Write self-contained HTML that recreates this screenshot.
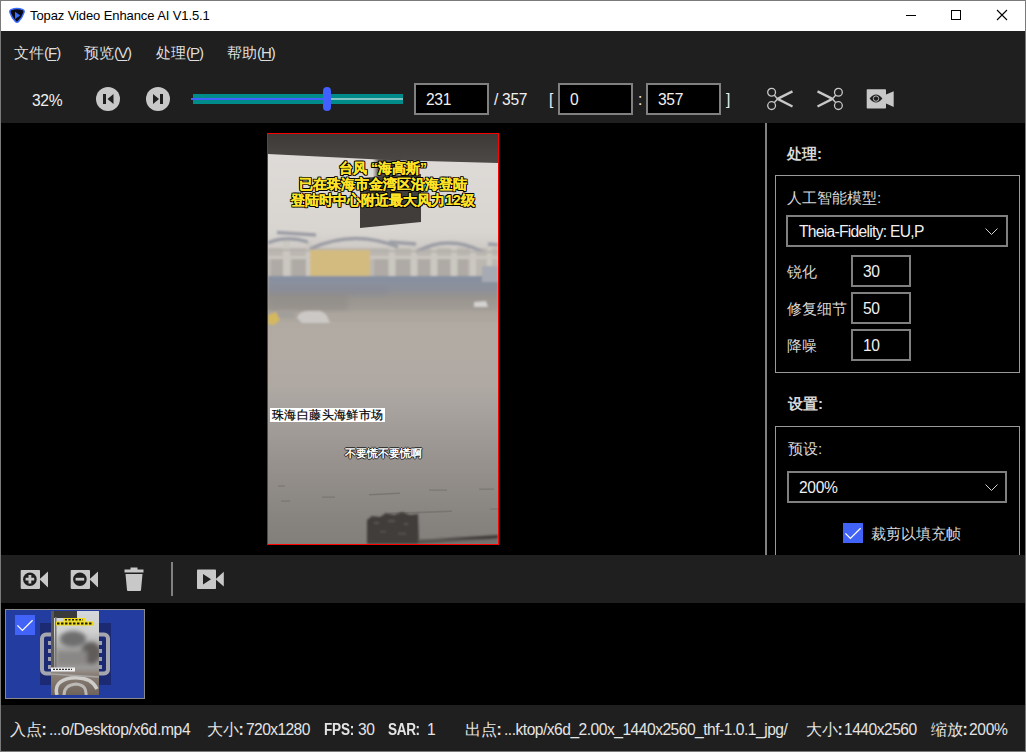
<!DOCTYPE html>
<html><head><meta charset="utf-8">
<style>
html,body{margin:0;padding:0;}
body{width:1026px;height:752px;position:relative;overflow:hidden;background:#000;font-family:"Liberation Sans",sans-serif;color:#e8e8e8;}
.a{position:absolute;}
.t{position:absolute;white-space:nowrap;line-height:1;}
#border{left:0;top:0;width:1024px;height:750px;border:1px solid #7a7a7a;z-index:50;pointer-events:none;}
#title{left:0;top:0;width:1026px;height:31px;background:#fff;}
#dark1{left:0;top:31px;width:1026px;height:92px;background:#1f1f1f;}
#main{left:0;top:123px;width:1026px;height:432px;background:#000;}
#tb2{left:0;top:555px;width:1026px;height:48px;background:#1f1f1f;}
#thumbs{left:0;top:603px;width:1026px;height:102px;background:#000;}
#status{left:0;top:705px;width:1026px;height:47px;background:#1f1f1f;}
.menu{font-size:15px;color:#dedede;top:45px;}
.menu u{text-decoration:underline;text-underline-offset:2px;}
.box{position:absolute;background:#000;border:2px solid #808080;box-sizing:border-box;}
.val{font-size:15.6px;color:#f0f0f0;letter-spacing:-0.3px;}
.lbl{font-size:15px;color:#d8d8d8;}
.grp{position:absolute;border:1px solid #9a9a9a;box-sizing:border-box;}
.st{font-size:15.6px;color:#e4e4e4;top:722px;letter-spacing:-0.3px;}
.st b{font-weight:bold;}
.sub{position:absolute;text-align:center;font-size:14px;line-height:15px;font-weight:bold;color:#ffe425;-webkit-text-stroke:0.15px #ffe425;white-space:nowrap;text-shadow:1px 0 0 #000,-1px 0 0 #000,0 1px 0 #000,0 -1px 0 #000,1px 1px 0 #000,-1px -1px 0 #000,1px -1px 0 #000,-1px 1px 0 #000;}
</style></head><body>
<div id="title" class="a"></div>
<div id="dark1" class="a"></div>
<div id="main" class="a"></div>
<div id="tb2" class="a"></div>
<div id="thumbs" class="a"></div>
<div id="status" class="a"></div>

<!-- title bar -->
<svg class="a" style="left:8px;top:6px" width="18" height="18" viewBox="0 0 18 18">
  <path d="M3.2 3.6 Q9 1.2 14.8 3.6 Q16.6 4.4 16 6.4 Q14.2 12 10.4 15.6 Q9 16.8 7.6 15.6 Q3.8 12 2 6.4 Q1.4 4.4 3.2 3.6Z" fill="#0b0b18" stroke="#3a6cff" stroke-width="1.5"/>
  <path d="M7 5.8 L12.2 9.4 L7 13Z" fill="#3d6dff"/>
</svg>
<div class="t" style="left:30px;top:9px;font-size:13px;color:#000;letter-spacing:-0.1px;">Topaz Video Enhance AI V1.5.1</div>
<div class="a" style="left:906px;top:15px;width:10px;height:1px;background:#000;"></div>
<div class="a" style="left:951px;top:10px;width:8px;height:8px;border:1px solid #000;"></div>
<svg class="a" style="left:996px;top:9px" width="12" height="12" viewBox="0 0 12 12"><path d="M1 1L11 11M11 1L1 11" stroke="#000" stroke-width="1.1"/></svg>

<!-- menu -->
<div class="t menu" style="left:14px;">文件<span style="letter-spacing:-1px">(<u>F</u>)</span></div>
<div class="t menu" style="left:84px;">预览<span style="letter-spacing:-1px">(<u>V</u>)</span></div>
<div class="t menu" style="left:156px;">处理<span style="letter-spacing:-1px">(<u>P</u>)</span></div>
<div class="t menu" style="left:227px;">帮助<span style="letter-spacing:-1px">(<u>H</u>)</span></div>

<!-- toolbar -->
<div class="t val" style="left:32px;top:93px;">32%</div>
<svg class="a" style="left:96px;top:87px" width="24" height="24" viewBox="0 0 24 24">
  <circle cx="12" cy="12" r="12" fill="#c8c8c8"/>
  <rect x="7" y="7" width="3" height="10" fill="#1f1f1f"/>
  <path d="M17.5 7 L11.5 12 L17.5 17Z" fill="#1f1f1f"/>
</svg>
<svg class="a" style="left:146px;top:87px" width="24" height="24" viewBox="0 0 24 24">
  <circle cx="12" cy="12" r="12" fill="#c8c8c8"/>
  <rect x="14" y="7" width="3" height="10" fill="#1f1f1f"/>
  <path d="M7 7 L13 12 L7 17Z" fill="#1f1f1f"/>
</svg>
<!-- slider -->
<div class="a" style="left:193px;top:94px;width:210px;height:10px;background:#008b8b;"></div>
<div class="a" style="left:191px;top:98px;width:136px;height:2px;background:#4060ff;"></div>
<div class="a" style="left:327px;top:98px;width:76px;height:2px;background:#80c4c4;"></div>
<div class="a" style="left:323px;top:87px;width:8px;height:24px;border-radius:4px;background:#4060ff;"></div>

<div class="box" style="left:414px;top:83px;width:75px;height:32px;"></div>
<div class="t val" style="left:426px;top:92px;">231</div>
<div class="t val" style="left:494px;top:92px;">/ 357</div>
<div class="t val" style="left:549px;top:92px;">[</div>
<div class="box" style="left:558px;top:83px;width:75px;height:32px;"></div>
<div class="t val" style="left:570px;top:92px;">0</div>
<div class="t val" style="left:638px;top:92px;">:</div>
<div class="box" style="left:646px;top:83px;width:75px;height:32px;"></div>
<div class="t val" style="left:658px;top:92px;">357</div>
<div class="t val" style="left:726px;top:92px;">]</div>

<!-- scissors -->
<svg class="a" style="left:764px;top:85px" width="32" height="28" viewBox="0 0 32 28">
  <circle cx="7.6" cy="7.2" r="3.9" fill="none" stroke="#c8c8c8" stroke-width="1.3"/>
  <circle cx="7.6" cy="20.6" r="3.9" fill="none" stroke="#c8c8c8" stroke-width="1.3"/>
  <path d="M10.2 10 L13.5 13.9 L10.2 17.8" fill="none" stroke="#c8c8c8" stroke-width="1.4"/>
  <path d="M12 13.2 L28 5.2 L29 7.4 L15.5 14.2 Z" fill="#c8c8c8"/>
  <path d="M12 14.6 L28 22.6 L29 20.4 L15.5 13.6 Z" fill="#c8c8c8"/>
</svg>
<svg class="a" style="left:814px;top:85px" width="32" height="28" viewBox="0 0 32 28">
  <circle cx="24.4" cy="7.2" r="3.9" fill="none" stroke="#c8c8c8" stroke-width="1.3"/>
  <circle cx="24.4" cy="20.6" r="3.9" fill="none" stroke="#c8c8c8" stroke-width="1.3"/>
  <path d="M21.8 10 L18.5 13.9 L21.8 17.8" fill="none" stroke="#c8c8c8" stroke-width="1.4"/>
  <path d="M20 13.2 L4 5.2 L3 7.4 L16.5 14.2 Z" fill="#c8c8c8"/>
  <path d="M20 14.6 L4 22.6 L3 20.4 L16.5 13.6 Z" fill="#c8c8c8"/>
</svg>
<svg class="a" style="left:866px;top:89px" width="28" height="20" viewBox="0 0 28 20">
  <rect x="0.7" y="0.2" width="19.3" height="19.3" rx="0.8" fill="#c8c8c8"/>
  <path d="M19.5 5.8 L27.7 2.2 L27.7 18 L19.5 14.2Z" fill="#c8c8c8"/>
  <path d="M3.6 9.6 Q10 1.6 16.4 9.6 Q10 17.6 3.6 9.6Z" fill="#1f1f1f"/>
  <circle cx="10" cy="9.6" r="2.7" fill="none" stroke="#c8c8c8" stroke-width="0.9"/>
  <circle cx="10" cy="9.6" r="1.6" fill="#1f1f1f"/>
</svg>

<!-- right panel -->
<div class="a" style="left:765px;top:123px;width:2px;height:432px;background:#808080;"></div>
<div class="t lbl" style="left:787px;top:146px;font-weight:bold;">处理:</div>
<div class="grp" style="left:775px;top:175px;width:245px;height:198px;"></div>
<div class="t lbl" style="left:787px;top:190px;">人工智能模型:</div>
<div class="box" style="left:786px;top:215px;width:222px;height:32px;"></div>
<div class="t val" style="left:799px;top:223.5px;letter-spacing:-0.7px;">Theia-Fidelity: EU,P</div>
<svg class="a" style="left:984px;top:227px" width="15" height="9" viewBox="0 0 15 9"><path d="M1.5 1.5L7.5 7.5L13.5 1.5" fill="none" stroke="#d0d0d0" stroke-width="1"/></svg>
<div class="t lbl" style="left:787px;top:264px;">锐化</div>
<div class="box" style="left:851px;top:255px;width:60px;height:32px;"></div>
<div class="t val" style="left:863px;top:264px;">30</div>
<div class="t lbl" style="left:787px;top:301px;">修复细节</div>
<div class="box" style="left:851px;top:292px;width:60px;height:32px;"></div>
<div class="t val" style="left:863px;top:301px;">50</div>
<div class="t lbl" style="left:787px;top:338px;">降噪</div>
<div class="box" style="left:851px;top:329px;width:60px;height:32px;"></div>
<div class="t val" style="left:863px;top:338px;">10</div>

<div class="t lbl" style="left:788px;top:396px;font-weight:bold;">设置:</div>
<div class="grp" style="left:775px;top:426px;width:245px;height:129px;border-bottom:none;"></div>
<div class="t lbl" style="left:788px;top:441px;">预设:</div>
<div class="box" style="left:787px;top:471px;width:220px;height:32px;"></div>
<div class="t val" style="left:799px;top:480px;">200%</div>
<svg class="a" style="left:984px;top:483px" width="15" height="9" viewBox="0 0 15 9"><path d="M1.5 1.5L7.5 7.5L13.5 1.5" fill="none" stroke="#d0d0d0" stroke-width="1"/></svg>
<div class="a" style="left:843px;top:523px;width:20px;height:20px;background:#4163f7;"></div>
<svg class="a" style="left:843px;top:523px" width="20" height="20" viewBox="0 0 20 20"><path d="M2.4 10.4L7.4 15.4L17.6 5.3" fill="none" stroke="#fff" stroke-width="1.3"/></svg>
<div class="t lbl" style="left:871px;top:526px;">裁剪以填充帧</div>

<!-- video frame placeholder -->
<div class="a" style="left:267px;top:133px;width:230px;height:410px;border:1px solid #ff0000;background:#9a948e;overflow:hidden;" id="frame">
<svg width="230" height="410" viewBox="0 0 230 410" style="position:absolute;left:0;top:0">
<defs>
<linearGradient id="gbg" x1="0" y1="0" x2="0" y2="1">
<stop offset="0" stop-color="#e0dcd9"/>
<stop offset="0.24" stop-color="#d8d4d0"/>
<stop offset="0.42" stop-color="#a9a39c"/>
<stop offset="0.46" stop-color="#b0aaa2"/>
<stop offset="0.52" stop-color="#b2aba4"/>
<stop offset="0.61" stop-color="#b0a9a3"/>
<stop offset="0.65" stop-color="#aaa5a0"/>
<stop offset="0.80" stop-color="#97928e"/>
<stop offset="0.94" stop-color="#87837f"/>
<stop offset="1" stop-color="#827e7a"/>
</linearGradient>
<linearGradient id="gband" x1="0" y1="0" x2="0" y2="1">
<stop offset="0" stop-color="#3c3937"/>
<stop offset="1" stop-color="#4c4946"/>
</linearGradient>
<linearGradient id="gmist" x1="0" y1="0" x2="0" y2="1">
<stop offset="0" stop-color="#8690a2"/>
<stop offset="0.35" stop-color="#8c909a"/>
<stop offset="0.6" stop-color="#98948f"/>
<stop offset="1" stop-color="#a49e97"/>
</linearGradient>
<filter id="bl1" x="-10%" y="-10%" width="120%" height="120%"><feGaussianBlur stdDeviation="1"/></filter>
<filter id="bl2" x="-10%" y="-10%" width="120%" height="120%"><feGaussianBlur stdDeviation="2"/></filter>
<filter id="bl05" x="-10%" y="-10%" width="120%" height="120%"><feGaussianBlur stdDeviation="0.6"/></filter>
</defs>
<rect x="0" y="0" width="230" height="410" fill="url(#gbg)"/>
<!-- buildings -->
<g filter="url(#bl1)">
<rect x="0" y="114" width="230" height="31" fill="#bcb7b1"/>
<g fill="#afaaa5">
<rect x="3" y="125" width="12" height="18"/><rect x="24" y="125" width="14" height="18"/><rect x="106" y="125" width="14" height="18"/><rect x="128" y="125" width="14" height="18"/><rect x="150" y="125" width="12" height="18"/><rect x="170" y="125" width="12" height="18"/><rect x="190" y="125" width="10" height="18"/>
</g>
<g fill="#cbc7c1">
<rect x="15" y="106" width="7" height="38"/><rect x="38" y="108" width="6" height="36"/><rect x="121" y="108" width="6" height="36"/><rect x="143" y="110" width="6" height="34"/><rect x="163" y="112" width="6" height="32"/><rect x="183" y="114" width="6" height="30"/><rect x="202" y="114" width="6" height="30"/><rect x="219" y="112" width="5" height="32"/>
</g>
<rect x="0" y="122" width="230" height="3" fill="#cac6c0"/>
<g fill="none" stroke="#9c9ea6" stroke-width="3.4">
<path d="M9 98.5 L48 101"/>
<path d="M0 109 Q18 101 40 108"/>
<path d="M42 115 Q85 95 130 113"/>
<path d="M121 108 L148 110"/>
<path d="M148 118 Q180 100 215 118"/>
<path d="M220 110 L230 111"/>
<path d="M0 116 L230 118" stroke="#b4b0ac" stroke-width="2"/>
</g>
<rect x="42" y="116" width="60" height="26" fill="#d3bb7f"/>
<rect x="0" y="142" width="230" height="36" fill="url(#gmist)"/>
<rect x="214" y="132" width="16" height="16" fill="#a6aab2"/>
<rect x="0" y="152" width="120" height="10" fill="#868994" opacity="0.4" filter="url(#bl2)"/>
</g>
<g filter="url(#bl1)">
<rect x="0" y="176" width="230" height="12" fill="#aaa49d" opacity="0.5"/>
<rect x="0" y="160" width="80" height="16" fill="#8e8a86" opacity="0.5" filter="url(#bl2)"/>
<path d="M7 184 L9 177 L25 176 L27 184Z" fill="#a29e9a"/>
<path d="M29 184 Q31 177 40 177 L52 177 Q58 179 60 184 L62 189 L34 189Z" fill="#cbc8c5"/>
<path d="M0 181 L8 178 L12 186 L6 191 L0 190Z" fill="#d4b860"/>
<path d="M206 168 L218 167 L220 173 L206 173Z" fill="#d4d2d0"/>
</g>
<!-- top dark band -->
<path d="M0 0 L230 0 L230 29 L120 26 L0 20Z" fill="url(#gband)"/>
<rect x="108" y="24" width="22" height="22" fill="#4a4744" filter="url(#bl2)"/>
<path d="M92 44 L153 40 L153 88 L92 94Z" fill="#403d3b" filter="url(#bl05)"/>
<!-- ripples on water -->
<g filter="url(#bl05)" fill="#75716d" opacity="0.8">
<path d="M101 360 L132 358.5 L132 360 L101 361.5Z"/>
<rect x="54" y="362.5" width="13" height="1.2"/>
<rect x="10" y="351.5" width="7" height="1.2"/>
<rect x="161" y="355.5" width="18" height="1.2"/>
<rect x="211" y="354.5" width="15" height="1.2"/>
<rect x="222" y="374.5" width="8" height="1.2"/>
<rect x="13" y="366.5" width="9" height="1.2"/>
<path d="M121 378.5 L184 376.5 L184 378 L121 380.5Z"/>
</g>
<g filter="url(#bl1)">
<path d="M99 386 L104 382 L112 383 L118 379 L126 381 L134 378 L142 381 L150 380 L151 410 L99 410Z" fill="#403d3a"/>
<path d="M150 406 L230 401 L230 404.5 L150 410Z" fill="#3e3b38"/><rect x="150" y="405" width="80" height="5" fill="#6a6662" opacity="0.6"/>
<g fill="#5e5a56" opacity="0.8"><rect x="106" y="388" width="5" height="2"/><rect x="120" y="386" width="7" height="2"/><rect x="136" y="389" width="4" height="2"/><rect x="112" y="397" width="6" height="1.5"/><rect x="130" y="399" width="8" height="1.5"/></g>
</g>
</g>
</svg>
<div class="sub" style="left:0;top:27px;width:230px;">台风 “海高斯”</div>
<div class="sub" style="left:0;top:43px;width:230px;">已在珠海市金湾区沿海登陆</div>
<div class="sub" style="left:0;top:59px;width:230px;">登陆时中心附近最大风力12级</div>
<div class="t" style="left:2px;top:274px;width:115px;height:14px;background:#fff;color:#000;font-size:12px;line-height:14px;padding-left:2px;box-sizing:border-box;-webkit-text-stroke:0.2px #000;letter-spacing:0.4px;">珠海白藤头海鲜市场</div>
<div class="t" style="left:77px;top:313px;color:#fff;font-size:11px;line-height:12px;font-weight:bold;text-shadow:1px 0 0 #222,-1px 0 0 #222,0 1px 0 #222,0 -1px 0 #222;">不要慌不要慌啊</div>
</div>

<!-- bottom toolbar -->
<div class="a" style="left:171px;top:562px;width:2px;height:34px;background:#808080;"></div>
<svg class="a" style="left:20px;top:569px" width="29" height="21" viewBox="0 0 29 21">
<rect x="0.7" y="0.9" width="19.3" height="19" rx="0.8" fill="#c8c8c8"/><path d="M19.5 10.2 L28 2.6 L28 18.4Z" fill="#c8c8c8"/>
<circle cx="9.9" cy="10.2" r="6.8" fill="#1f1f1f"/><path d="M9.9 5.9V14.5M5.6 10.2H14.2" stroke="#c8c8c8" stroke-width="2.8"/>
</svg>
<svg class="a" style="left:70px;top:569px" width="29" height="21" viewBox="0 0 29 21">
<rect x="0.7" y="0.9" width="19.3" height="19" rx="0.8" fill="#c8c8c8"/><path d="M19.5 10.2 L28 2.6 L28 18.4Z" fill="#c8c8c8"/>
<circle cx="9.9" cy="10.2" r="6.8" fill="#1f1f1f"/><path d="M5.6 10.2H14.2" stroke="#c8c8c8" stroke-width="2.8"/>
</svg>
<svg class="a" style="left:123px;top:566px" width="22" height="26" viewBox="0 0 22 26">
<path d="M7.5 1.5 H14.5 V3.5 H20.5 V6.5 H1.5 V3.5 H7.5Z" fill="#c8c8c8"/>
<path d="M2.5 8 H19.5 L18 24 Q18 25 17 25 H5 Q4 25 4 24Z" fill="#c8c8c8"/>
</svg>
<svg class="a" style="left:196px;top:569px" width="29" height="21" viewBox="0 0 29 21">
<rect x="1" y="0.5" width="19" height="19.5" rx="0.8" fill="#c8c8c8"/><path d="M19.5 10.2 L27.8 2.8 L27.8 17.6Z" fill="#c8c8c8"/>
<path d="M7 5 L15 10.2 L7 15.4Z" fill="#1f1f1f"/>
</svg>

<!-- thumbnail -->
<div class="a" style="left:5px;top:609px;width:140px;height:90px;background:#233c9f;border:1px solid #8a8a8a;box-sizing:border-box;"></div>
<svg class="a" style="left:40px;top:622px" width="71" height="63" viewBox="0 0 71 63">
<rect x="0" y="1" width="71" height="62" fill="#1b2a72"/>
<rect x="2" y="12.5" width="66" height="39" rx="4" fill="none" stroke="#a6a6ae" stroke-width="4"/>
<g fill="#9ea0b0"><rect x="8" y="19" width="4" height="4"/><rect x="8" y="27" width="4" height="4"/><rect x="8" y="35" width="4" height="4"/><rect x="8" y="43" width="4" height="4"/>
<rect x="58" y="19" width="4" height="4"/><rect x="58" y="27" width="4" height="4"/><rect x="58" y="35" width="4" height="4"/><rect x="58" y="43" width="4" height="4"/></g>
</svg>
<svg class="a" style="left:51px;top:611px" width="48" height="84" viewBox="0 0 48 84">
<defs><linearGradient id="tg" x1="0" y1="0" x2="0" y2="1">
<stop offset="0" stop-color="#d4d8da"/><stop offset="0.25" stop-color="#d0d0d0"/><stop offset="0.45" stop-color="#a6a6a4"/><stop offset="0.68" stop-color="#9a9896"/><stop offset="0.75" stop-color="#8a8078"/><stop offset="1" stop-color="#6e645c"/></linearGradient>
<filter id="tb" x="-30%" y="-30%" width="160%" height="160%"><feGaussianBlur stdDeviation="2"/></filter><filter id="tb2"><feGaussianBlur stdDeviation="0.4"/></filter></defs>
<rect width="48" height="84" fill="url(#tg)"/>
<rect x="0" y="0" width="26" height="7" fill="#3a3a3a" filter="url(#tb2)"/>
<g filter="url(#tb)"><ellipse cx="22" cy="28" rx="13" ry="8" fill="#6e6e6e"/><ellipse cx="40" cy="42" rx="10" ry="11" fill="#5e5c5a"/><rect x="6" y="40" width="30" height="14" fill="#8a8886"/></g>
<rect x="0" y="0" width="3" height="60" fill="#5a5856"/>
<rect x="4" y="6" width="1.5" height="52" fill="#777"/>
<rect x="12" y="7" width="22" height="3.5" fill="#f0dc10"/><rect x="5" y="10.5" width="38" height="4" fill="#f0dc10"/>
<g filter="url(#tb2)"><path d="M14 8.7 H32" stroke="#1a1a1a" stroke-width="1.6" stroke-dasharray="2 1.5"/><path d="M6 12.4 H42" stroke="#1a1a1a" stroke-width="2" stroke-dasharray="2.5 1.5"/></g>
<rect x="0" y="56.5" width="24" height="4" fill="#f0f0f0"/>
<path d="M2 58.4 H21" stroke="#333" stroke-width="1.4" stroke-dasharray="2 1"/>
<g filter="url(#tb2)">
<path d="M6 84 Q2 70 20 67 Q40 65 46 78" fill="none" stroke="#cfcdca" stroke-width="3.5"/>
<path d="M13 84 Q13 74 25 73 Q36 74 35 84" fill="none" stroke="#bdbab6" stroke-width="3"/>
<path d="M0 63 L48 66" stroke="#a8a6a4" stroke-width="1.5"/>
</g>
</svg>
<div class="a" style="left:15px;top:615px;width:20px;height:20px;background:#4163f7;"></div>
<svg class="a" style="left:15px;top:615px" width="20" height="20" viewBox="0 0 20 20"><path d="M2.4 10.4L7.4 15.4L17.6 5.3" fill="none" stroke="#fff" stroke-width="1.3"/></svg>

<!-- status -->
<div class="t st" style="left:10px;">入点<b>:</b></div>
<div class="t st" style="left:49px;">...o/Desktop/x6d.mp4</div>
<div class="t st" style="left:207px;">大小<b>:</b></div>
<div class="t st" style="left:246px;letter-spacing:-0.6px;">720x1280</div>
<div class="t st" style="left:324px;transform:scaleX(0.87);transform-origin:0 0;letter-spacing:-0.2px;"><b>FPS:</b></div>
<div class="t st" style="left:358px;">30</div>
<div class="t st" style="left:388px;transform:scaleX(0.87);transform-origin:0 0;letter-spacing:-0.4px;"><b>SAR:</b></div>
<div class="t st" style="left:427px;">1</div>
<div class="t st" style="left:465px;">出点<b>:</b></div>
<div class="t st" style="left:504px;letter-spacing:-0.5px;">...ktop/x6d_2.00x_1440x2560_thf-1.0.1_jpg/</div>
<div class="t st" style="left:806px;">大小<b>:</b></div>
<div class="t st" style="left:844px;letter-spacing:-0.5px;">1440x2560</div>
<div class="t st" style="left:931px;">缩放<b>:</b></div>
<div class="t st" style="left:969px;">200%</div>

<div id="border" class="a"></div>
</body></html>
